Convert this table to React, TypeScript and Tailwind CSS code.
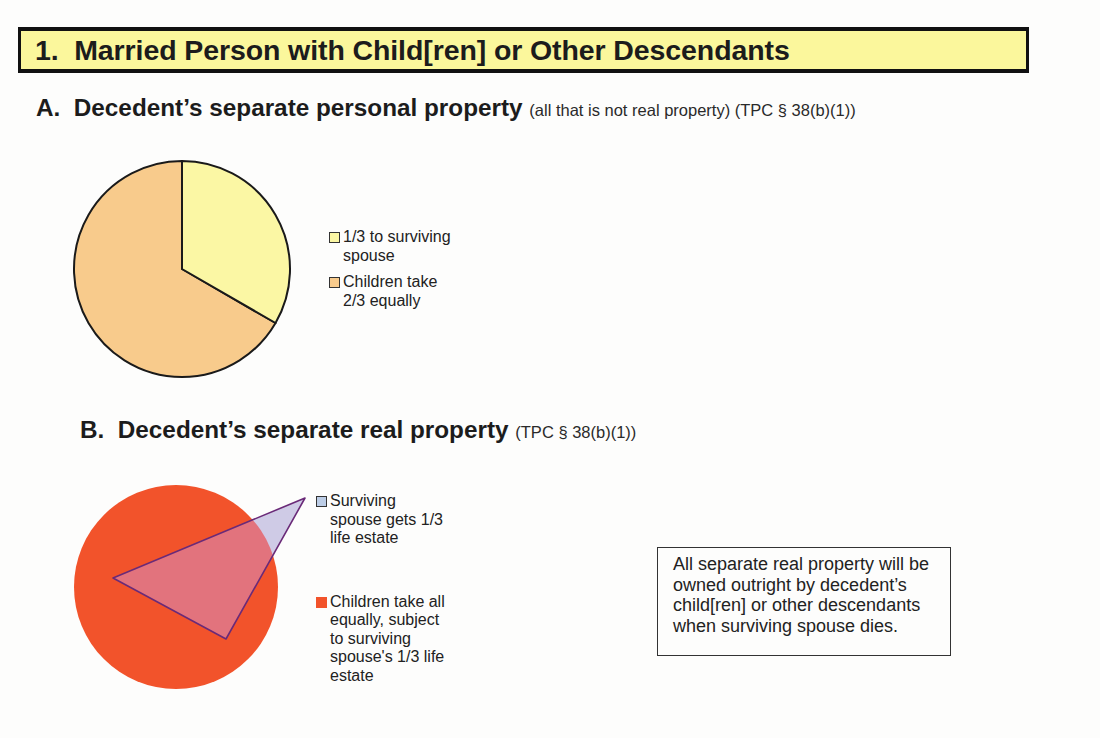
export default function App() {
  return (
    <div className="relative w-[1100px] h-[738px] overflow-hidden bg-[#fdfdfc] text-[#1c1c1c] font-['Liberation_Sans',Arial,sans-serif]">
      {/* Section title */}
      <div className="ml-[18px] mt-[27px] flex h-[46px] w-[1011px] items-center border-x-[3px] border-y-4 border-[#111] bg-[#fbf79c] pl-[14px]">
        <h1 className="text-[28.5px] font-bold leading-none tracking-[-0.1px]">
          1.&nbsp; Married Person with Child[ren] or Other Descendants
        </h1>
      </div>

      {/* A. personal property */}
      <h2 className="ml-[36px] mt-[22px] text-[24.3px] font-bold leading-[26px]">
        A.&nbsp; Decedent’s separate personal property{" "}
        <span className="font-['Liberation_Sans_Narrow','Arial_Narrow',sans-serif] text-[16.5px] font-normal text-[#2a2a2a]">
          (all that is not real property) (TPC § 38(b)(1))
        </span>
      </h2>

      <div className="mt-[36px] flex items-start">
        <PersonalPie />
        <div className="ml-[37px] mt-[69px] flex flex-col gap-[8px] text-[16px] leading-[18.5px] text-[#222]">
          <LegendItem swatch="border border-[#333] bg-[#fbf7a4]" lines={["1/3 to surviving", "spouse"]} />
          <LegendItem swatch="border border-[#333] bg-[#f8cb8c]" lines={["Children take", "2/3 equally"]} />
        </div>
      </div>

      {/* B. real property */}
      <h2 className="ml-[80px] mt-[38px] text-[24.3px] font-bold leading-[26px]">
        B.&nbsp; Decedent’s separate real property{" "}
        <span className="font-['Liberation_Sans_Narrow','Arial_Narrow',sans-serif] text-[16.5px] font-normal text-[#2a2a2a]">
          (TPC § 38(b)(1))
        </span>
      </h2>

      <div className="mt-[40px] flex items-start">
        <RealPie />
        <div className="ml-[6px] mt-[7px] flex w-[150px] flex-col gap-[45px] text-[16px] leading-[18.5px] text-[#222]">
          <LegendItem
            swatch="border border-[#333] bg-[#bccde6]"
            lines={["Surviving", "spouse gets 1/3", "life estate"]}
          />
          <LegendItem
            swatch="bg-[#f2532b]"
            lines={["Children take all", "equally, subject", "to surviving", "spouse's 1/3 life", "estate"]}
          />
        </div>
        <div className="ml-[191px] mt-[62px] h-[109px] w-[294px] border-[1.5px] border-[#333] pl-[15px] pt-[6px] text-[18px] leading-[20.5px] text-[#222]">
          All separate real property will be
          <br />
          owned outright by decedent’s
          <br />
          child[ren] or other descendants
          <br />
          when surviving spouse dies.
        </div>
      </div>
    </div>
  );
}

function LegendItem({ swatch, lines }: { swatch: string; lines: string[] }) {
  return (
    <div className="flex items-start">
      <span className={`mt-[4px] h-[11px] w-[11px] shrink-0 ${swatch}`} />
      <div className="ml-[3px]">
        {lines.map((l, i) => (
          <div key={i}>{l}</div>
        ))}
      </div>
    </div>
  );
}

function PersonalPie() {
  // center (110,110), r 108; yellow slice is the first third, clockwise from 12 o'clock
  const cx = 110;
  const cy = 110;
  const r = 108;
  const ex = cx + r * Math.sin((2 * Math.PI) / 3);
  const ey = cy - r * Math.cos((2 * Math.PI) / 3);
  return (
    <svg width="220" height="220" viewBox="0 0 220 220" className="ml-[72px] shrink-0">
      <path
        d={`M${cx},${cy} L${ex},${ey} A${r},${r} 0 1 1 ${cx},${cy - r} Z`}
        fill="#f8cb8c"
        stroke="#1a1a1a"
        strokeWidth="2"
        strokeLinejoin="round"
      />
      <path
        d={`M${cx},${cy} L${cx},${cy - r} A${r},${r} 0 0 1 ${ex},${ey} Z`}
        fill="#fbf7a4"
        stroke="#1a1a1a"
        strokeWidth="2"
        strokeLinejoin="round"
      />
    </svg>
  );
}

function RealPie() {
  const tri = "43,93 235,13 156,154";
  return (
    <svg width="240" height="210" viewBox="0 0 240 210" className="ml-[70px] shrink-0">
      <defs>
        <clipPath id="circ">
          <circle cx="106" cy="102" r="102" />
        </clipPath>
      </defs>
      <circle cx="106" cy="102" r="102" fill="#f2532b" />
      <polygon points={tri} fill="#cfcbe6" />
      <polygon points={tri} fill="#e2737d" clipPath="url(#circ)" />
      <polygon points={tri} fill="none" stroke="#6a2a78" strokeWidth="1.6" strokeLinejoin="round" />
    </svg>
  );
}
